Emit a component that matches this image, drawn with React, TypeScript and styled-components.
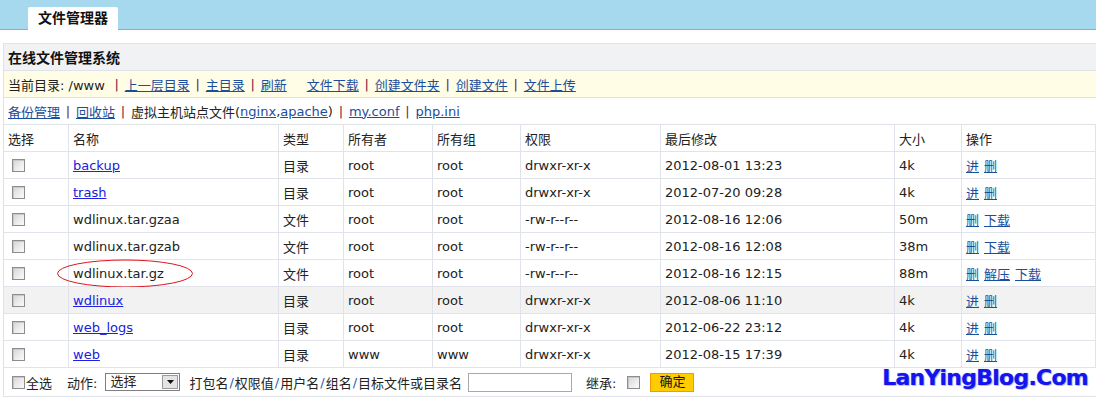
import React from "react";
import styled, { createGlobalStyle } from "styled-components";

const GlobalStyle = createGlobalStyle`
  html, body { margin: 0; padding: 0; background: #fff; overflow: hidden; }
  body {
    font-family: "DejaVu Sans", "Noto Sans CJK SC", sans-serif;
    font-size: 13px;
    color: #222;
  }
  * { box-sizing: border-box; }
`;

const COLS = "65px 210px 65px 89px 88px 140px 234px 67px 1fr";

const Page = styled.div`
  width: 1096px;
  height: 401px;
  position: relative;
`;

const TopBar = styled.div`
  height: 30px;
  background: #a7d9ee;
  border-bottom: 1px solid #6cb8dd;
  padding-left: 28px;
  display: flex;
  align-items: flex-end;
`;

const Tab = styled.div`
  height: 23px;
  margin-bottom: -1px;
  padding: 0 10px;
  background: #fff;
  border-radius: 2px 2px 0 0;
  font-weight: bold;
  font-size: 14px;
  line-height: 23px;
  color: #111;
`;

const Panel = styled.div`
  margin: 13px 0 0 3px;
  border-left: 1px solid #dfe3e8;
  border-top: 1px solid #dfe3e8;
`;

const Bar = styled.div<{ $bg?: string }>`
  height: 27px;
  border-bottom: 1px solid #dfe3e8;
  background: ${(p) => p.$bg || "#fff"};
  display: flex;
  align-items: center;
  padding-left: 4px;
  white-space: nowrap;
`;

const Title = styled.span`
  font-weight: bold;
  font-size: 14px;
  color: #111;
`;

const NavLink = styled.a<{ $gap?: number }>`
  color: #1d4e9b;
  text-decoration: underline;
  cursor: pointer;
  margin-left: ${(p) => p.$gap || 0}px;
`;

const Sep = styled.span`
  color: #74213f;
  padding: 0 5.8px;
`;

const CurDir = styled.span`
  margin-right: 4px;
`;

const Row = styled.div<{ $bg?: string }>`
  position: relative;
  display: grid;
  grid-template-columns: ${COLS};
  height: 27px;
  border-bottom: 1px solid #e0e4ea;
  background: ${(p) => p.$bg || "#fff"};
`;

const Cell = styled.div`
  border-right: 1px solid #e0e4ea;
  padding-left: 4px;
  display: flex;
  align-items: center;
  white-space: nowrap;
  overflow: hidden;
`;

const Check = styled.span`
  display: inline-block;
  vertical-align: middle;
  width: 13px;
  height: 13px;
  border: 1px solid #8d8d8d;
  background: linear-gradient(135deg, #d4d4d4 0%, #eeeeee 60%, #fafafa 100%);
  box-shadow: inset 1px 1px 0 #c8c8c8;
  flex: none;
`;

const CheckCell = styled(Cell)`
  padding-left: 8px;
`;

const FileLink = styled.a`
  color: #2020e0;
  text-decoration: underline;
  cursor: pointer;
`;

const ActLink = styled.a`
  color: #1b4f9b;
  text-decoration: underline;
  margin-right: 5px;
  cursor: pointer;
`;

const Ellipse = styled.svg`
  position: absolute;
  left: 52px;
  top: -1px;
  pointer-events: none;
`;

const Footer = styled.div`
  position: relative;
  height: 29px;
  border-bottom: 1px solid #e0e4ea;
  display: flex;
  align-items: center;
  padding-left: 8px;
  white-space: nowrap;
`;

const Label = styled.span<{ $ml?: number }>`
  margin-left: ${(p) => p.$ml || 0}px;
  display: inline-flex;
  align-items: center;
`;

const Slash = styled.span`
  color: #2a5db5;
  padding: 0 1px;
`;

const SelectBox = styled.div`
  margin-left: 8px;
  width: 75px;
  height: 18px;
  border: 1px solid #7f7f7f;
  display: flex;
  align-items: stretch;
  background: #fff;
`;

const SelectText = styled.span`
  flex: 1;
  padding-left: 4px;
  line-height: 16px;
`;

const SelectBtn = styled.span`
  width: 16px;
  margin: 1px;
  background: #e4e4e4;
  border: 1px solid #9a9a9a;
  display: flex;
  align-items: center;
  justify-content: center;
`;

const TextInput = styled.input`
  margin-left: 6px;
  width: 104px;
  height: 19px;
  border: 1px solid #a9a9a9;
  padding: 0;
`;

const OkButton = styled.button`
  margin-left: 10px;
  width: 44px;
  height: 19px;
  background: #ffcc00;
  border: 1px solid #f29c00;
  padding: 0;
  font-family: "DejaVu Sans", "Noto Sans CJK SC", sans-serif;
  font-size: 13px;
  color: #111;
  line-height: 16px;
`;

const Watermark = styled.div`
  position: absolute;
  right: 8px;
  top: -4px;
  font-family: "DejaVu Sans", sans-serif;
  font-weight: bold;
  font-size: 22px;
  letter-spacing: -0.75px;
  line-height: 28px;
  color: #1414ec;
  text-shadow: 0 0 1px #7070ff, 1px 1px 0 #c4c4ff;
`;

type FileRow = {
  name: string;
  link: boolean;
  type: string;
  owner: string;
  group: string;
  perm: string;
  time: string;
  size: string;
  acts: string[];
  bg?: string;
  mark?: boolean;
};

const files: FileRow[] = [
  { name: "backup", link: true, type: "目录", owner: "root", group: "root", perm: "drwxr-xr-x", time: "2012-08-01 13:23", size: "4k", acts: ["进", "删"] },
  { name: "trash", link: true, type: "目录", owner: "root", group: "root", perm: "drwxr-xr-x", time: "2012-07-20 09:28", size: "4k", acts: ["进", "删"] },
  { name: "wdlinux.tar.gzaa", link: false, type: "文件", owner: "root", group: "root", perm: "-rw-r--r--", time: "2012-08-16 12:06", size: "50m", acts: ["删", "下载"] },
  { name: "wdlinux.tar.gzab", link: false, type: "文件", owner: "root", group: "root", perm: "-rw-r--r--", time: "2012-08-16 12:08", size: "38m", acts: ["删", "下载"] },
  { name: "wdlinux.tar.gz", link: false, type: "文件", owner: "root", group: "root", perm: "-rw-r--r--", time: "2012-08-16 12:15", size: "88m", acts: ["删", "解压", "下载"], mark: true },
  { name: "wdlinux", link: true, type: "目录", owner: "root", group: "root", perm: "drwxr-xr-x", time: "2012-08-06 11:10", size: "4k", acts: ["进", "删"], bg: "#f2f2f2" },
  { name: "web_logs", link: true, type: "目录", owner: "root", group: "root", perm: "drwxr-xr-x", time: "2012-06-22 23:12", size: "4k", acts: ["进", "删"] },
  { name: "web", link: true, type: "目录", owner: "www", group: "www", perm: "drwxr-xr-x", time: "2012-08-15 17:39", size: "4k", acts: ["进", "删"] },
];

const headers = ["名称", "类型", "所有者", "所有组", "权限", "最后修改", "大小", "操作"];

export default function App() {
  return (
    <Page>
      <GlobalStyle />
      <TopBar>
        <Tab>文件管理器</Tab>
      </TopBar>
      <Panel>
        <Bar $bg="#f1f2f4">
          <Title>在线文件管理系统</Title>
        </Bar>
        <Bar $bg="#fffde6">
          <CurDir>当前目录: /www</CurDir>
          <Sep>|</Sep>
          <NavLink>上一层目录</NavLink>
          <Sep>|</Sep>
          <NavLink>主目录</NavLink>
          <Sep>|</Sep>
          <NavLink>刷新</NavLink>
          <NavLink $gap={20}>文件下载</NavLink>
          <Sep>|</Sep>
          <NavLink>创建文件夹</NavLink>
          <Sep>|</Sep>
          <NavLink>创建文件</NavLink>
          <Sep>|</Sep>
          <NavLink>文件上传</NavLink>
        </Bar>
        <Bar>
          <NavLink>备份管理</NavLink>
          <Sep>|</Sep>
          <NavLink>回收站</NavLink>
          <Sep>|</Sep>
          <span>虚拟主机站点文件(</span>
          <NavLink>nginx</NavLink>
          <span>,</span>
          <NavLink>apache</NavLink>
          <span>)</span>
          <Sep>|</Sep>
          <NavLink>my.conf</NavLink>
          <Sep>|</Sep>
          <NavLink>php.ini</NavLink>
        </Bar>
        <Row>
          <Cell>选择</Cell>
          {headers.map((h) => (
            <Cell key={h}>{h}</Cell>
          ))}
        </Row>
        {files.map((f) => (
          <Row key={f.name} $bg={f.bg}>
            <CheckCell>
              <Check />
            </CheckCell>
            <Cell>{f.link ? <FileLink>{f.name}</FileLink> : f.name}</Cell>
            <Cell>{f.type}</Cell>
            <Cell>{f.owner}</Cell>
            <Cell>{f.group}</Cell>
            <Cell>{f.perm}</Cell>
            <Cell>{f.time}</Cell>
            <Cell>{f.size}</Cell>
            <Cell>
              {f.acts.map((a) => (
                <ActLink key={a}>{a}</ActLink>
              ))}
            </Cell>
            {f.mark && (
              <Ellipse width="138" height="29" viewBox="0 0 138 29">
                <ellipse cx="69" cy="14.5" rx="67.5" ry="13.5" fill="none" stroke="#e0141e" strokeWidth="1" />
              </Ellipse>
            )}
          </Row>
        ))}
        <Footer>
          <Check />
          <Label $ml={1}>全选</Label>
          <Label $ml={15}>动作:</Label>
          <SelectBox>
            <SelectText>选择</SelectText>
            <SelectBtn>
              <svg width="7" height="4" viewBox="0 0 7 4">
                <path d="M0 0 H7 L3.5 4 Z" fill="#111" />
              </svg>
            </SelectBtn>
          </SelectBox>
          <Label $ml={9}>
            打包名<Slash>/</Slash>权限值<Slash>/</Slash>用户名<Slash>/</Slash>组名<Slash>/</Slash>目标文件或目录名
          </Label>
          <TextInput />
          <Label $ml={14}>继承:</Label>
          <Label $ml={11}>
            <Check />
          </Label>
          <OkButton>确定</OkButton>
          <Watermark>LanYingBlog.Com</Watermark>
        </Footer>
      </Panel>
    </Page>
  );
}
